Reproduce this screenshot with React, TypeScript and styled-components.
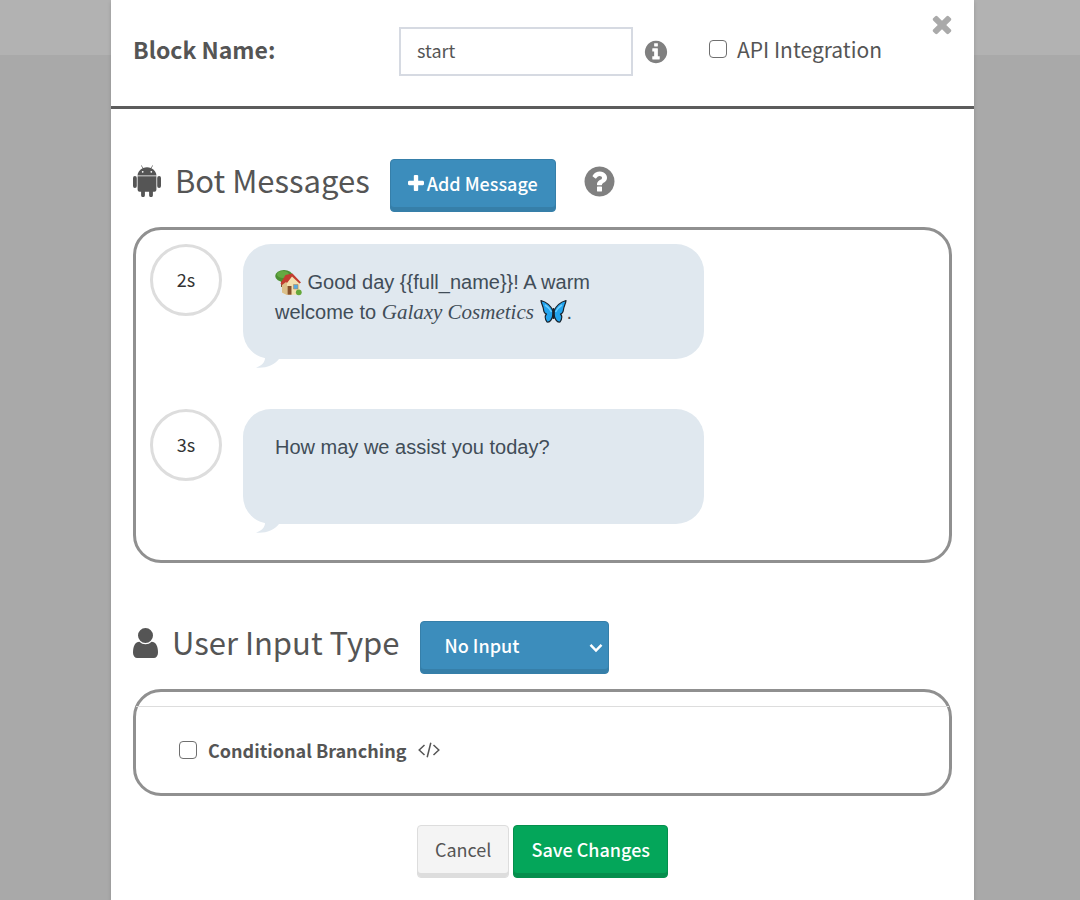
import React from "react";
import styled, { createGlobalStyle, css } from "styled-components";

const uiFont = `"Noto Sans CJK SC", "Source Sans Pro", sans-serif`;
const ink = "#555";

const GlobalStyle = createGlobalStyle`
  *, *::before, *::after { box-sizing: border-box; }
  body {
    margin: 0;
    background: #a9a9a9;
    color: ${ink};
    font-family: ${uiFont};
    font-size: 18px;
    line-height: 26px;
  }
`;

const Backdrop = styled.div`
  min-height: 100vh;
  display: flex;
  padding: 0 106px 0 111px;
  background: linear-gradient(#b2b2b2 55px, #a9a9a9 55px);
`;

const Dialog = styled.section`
  position: relative;
  flex: 1;
  min-width: 0;
  background: #fff;
  box-shadow: 0 2px 4px rgba(0, 0, 0, 0.15);
`;

const Header = styled.header`
  display: flex;
  align-items: center;
  padding: 27px 22px 30px;
  border-bottom: 3px solid #5c5c5c;
`;

const NameLabel = styled.label`
  width: 266px;
  padding-bottom: 6px;
  font-size: 23px;
  font-weight: 700;
`;

const NameInput = styled.input`
  width: 234px;
  height: 49px;
  padding: 0 16px 3px;
  border: 2px solid #d6dae2;
  border-radius: 0;
  background: #fff;
  color: ${ink};
  font: 400 18px/26px ${uiFont};
`;

const Icon = styled.svg<{ $width: number; $height: number }>`
  flex: none;
  display: block;
  width: ${(p) => p.$width}px;
  height: ${(p) => p.$height}px;
  fill: currentColor;
`;

const IconButton = styled.button`
  display: block;
  padding: 0;
  border: 0;
  background: none;
  color: #808080;
  cursor: pointer;
`;

const InfoButton = styled(IconButton)`
  margin-left: 10px;
`;

const HelpButton = styled(IconButton)`
  margin: 0 0 8px 26px;
`;

const CloseButton = styled(IconButton)`
  position: absolute;
  top: 10px;
  right: 18px;
  color: #aaa;
`;

const CheckLabel = styled.label<{ $strong?: boolean }>`
  display: flex;
  align-items: center;
  gap: ${(p) => (p.$strong ? 11 : 10)}px;
  font-size: ${(p) => (p.$strong ? 18 : 21)}px;
  font-weight: ${(p) => (p.$strong ? 700 : 400)};
`;

const ApiOption = styled.div`
  margin: 0 0 6px 40px;
`;

const Checkbox = styled.input`
  appearance: none;
  flex: none;
  width: 18px;
  height: 18px;
  margin: 0;
  border: 1px solid #6f6f6f;
  border-radius: 4px;
  background: #fff;
  &:checked { background: #3c8dbc; }
`;

const Body = styled.div`
  padding: 50px 22px 22px;
`;

const SectionHead = styled.div<{ $spaced?: boolean }>`
  display: flex;
  align-items: center;
  height: 53px;
  margin: ${(p) => (p.$spaced ? 58 : 0)}px 0 15px;
`;

const Title = styled.h2`
  display: flex;
  align-items: center;
  gap: 14px;
  margin: 0 20px 12px 0;
  font-size: 31px;
  font-weight: 400;
  line-height: 44px;
  white-space: nowrap;

  svg { margin-top: 3px; }
`;

const buttonBase = css`
  height: 53px;
  padding: 0 17px 6px;
  border: 1px solid;
  border-radius: 4px;
  font: 500 18px/26px ${uiFont};
  cursor: pointer;
`;

const tones = {
  primary: css`
    background: #3c8dbc;
    border-color: #367fa9;
    color: #fff;
    box-shadow: inset 0 -4px 0 #367fa9;
  `,
  success: css`
    background: #04a65a;
    border-color: #058f4d;
    color: #fff;
    box-shadow: inset 0 -4px 0 #058f4d;
  `,
  plain: css`
    background: #f4f4f4;
    border-color: #ddd;
    color: ${ink};
    font-weight: 400;
    box-shadow: inset 0 -4px 0 #ddd;
  `,
};

const Button = styled.button<{ $tone: keyof typeof tones }>`
  ${buttonBase}
  display: flex;
  align-items: center;
  gap: 3px;
  white-space: nowrap;
  ${(p) => tones[p.$tone]}
`;

const SelectWrap = styled.div`
  position: relative;
`;

const Select = styled.select`
  ${buttonBase}
  ${tones.primary}
  appearance: none;
  width: 189px;
  padding-left: 24px;
`;

const Chevron = styled.svg`
  position: absolute;
  top: 22px;
  right: 6px;
  width: 14px;
  height: 10px;
  pointer-events: none;
`;

const Panel = styled.div`
  border: 3px solid #909090;
  border-radius: 28px;
`;

const MessageList = styled.ol`
  display: flex;
  flex-direction: column;
  gap: 50px;
  margin: 0;
  padding: 14px 14px 36px;
  list-style: none;
`;

const Message = styled.li`
  display: flex;
  align-items: flex-start;
  gap: 21px;
`;

const Delay = styled.span`
  flex: none;
  display: flex;
  align-items: center;
  justify-content: center;
  width: 72px;
  height: 72px;
  padding-bottom: 2px;
  border: 3px solid #ddd;
  border-radius: 50%;
  color: #333;
`;

const Bubble = styled.div`
  position: relative;
  width: 461px;
  min-height: 115px;
  padding: 23px 80px 30px 32px;
  border-radius: 28px;
  background: #e0e8ef;
  color: #414d58;
  font: 400 20px/30px "Liberation Sans", Arial, sans-serif;
`;

const Tail = styled.svg`
  position: absolute;
  left: 13px;
  bottom: -9px;
  width: 26px;
  height: 14px;
  fill: #e0e8ef;
`;

const Brand = styled.em`
  font-family: "Liberation Serif", "Times New Roman", serif;
  font-size: 21px;
  line-height: 20px;
`;

const Emoji = styled.svg`
  display: inline-block;
  width: 27px;
  height: 27px;
  margin: -4px 0;
  vertical-align: -3px;
`;

const Branching = styled.div`
  display: flex;
  align-items: center;
  gap: 12px;
  margin-top: 14px;
  padding: 30px 43px;
  border-top: 1px solid #ddd;
`;

const Actions = styled.footer`
  display: flex;
  justify-content: center;
  gap: 4px;
  margin-top: 29px;
`;

const ring =
  "m640 416q0 209-103 385.5t-279.5 279.5-385.5 103-385.5-103-279.5-279.5-103-385.5 103-385.5 279.5-279.5 385.5-103 385.5 103 279.5 279.5 103 385.5z";

const glyphs = {
  info:
    "M1152 1376v-160q0-14-9-23t-23-9h-96v-512q0-14-9-23t-23-9h-320q-14 0-23 9t-9 23v160q0 14 9 23t23 9h96v320h-96q-14 0-23 9t-9 23v160q0 14 9 23t23 9h448q14 0 23-9t9-23zm-128-896v-160q0-14-9-23t-23-9h-192q-14 0-23 9t-9 23v160q0 14 9 23t23 9h192q14 0 23-9t9-23z" + ring,
  help:
    "M1024 1376v-192q0-14-9-23t-23-9h-192q-14 0-23 9t-9 23v192q0 14 9 23t23 9h192q14 0 23-9t9-23zm256-672q0-88-55.5-163t-138.5-116-170-41q-243 0-371 213-15 24 8 42l132 100q7 6 19 6 16 0 25-12 53-68 86-92 34-24 86-24 48 0 85.5 26t37.5 59q0 38-20 61t-68 45q-63 28-115.5 86.5t-52.5 125.5v36q0 14 9 23t23 9h192q14 0 23-9t9-23q0-19 21.5-49.5t54.5-49.5q32-18 49-28.5t46-35 44.5-48 28-60.5 12.5-81zm384 192q0 209-103 385.5t-279.5 279.5-385.5 103-385.5-103-279.5-279.5-103-385.5 103-385.5 279.5-279.5 385.5-103 385.5 103 279.5 279.5 103 385.5z",
  close:
    "M1490 1322q0 40-28 68l-136 136q-28 28-68 28t-68-28l-294-294-294 294q-28 28-68 28t-68-28l-136-136q-28-28-28-68t28-68l294-294-294-294q-28-28-28-68t28-68l136-136q28-28 68-28t68 28l294 294 294-294q28-28 68-28t68 28l136 136q28 28 28 68t-28 68l-294 294 294 294q28 28 28 68z",
  plus:
    "M1600 736v192q0 40-28 68t-68 28h-416v416q0 40-28 68t-68 28h-192q-40 0-68-28t-28-68v-416h-416q-40 0-68-28t-28-68v-192q0-40 28-68t68-28h416v-416q0-40 28-68t68-28h192q40 0 68 28t28 68v416h416q40 0 68 28t28 68z",
  user:
    "M1536 1399q0 109-62.500 187t-150.500 78h-854q-88 0-150.500-78t-62.500-187q0-85 8.500-160.500t31.500-152 58.500-131 94-89 134.500-34.500q131 128 313 128t313-128q76 0 134.500 34.500t94 89 58.500 131 31.500 152 8.500 160.500zm-256-887q0 159-112.500 271.500t-271.500 112.500-271.500-112.500-112.500-271.500 112.500-271.500 271.500-112.500 271.500 112.500 112.500 271.500z",
};

type GlyphProps = { name: keyof typeof glyphs; width: number; height?: number; box?: string };

const Glyph = ({ name, width, height = width, box = "0 0 1792 1792" }: GlyphProps) => (
  <Icon $width={width} $height={height} viewBox={box} aria-hidden="true">
    <path d={glyphs[name]} />
  </Icon>
);

const AndroidIcon = () => (
  <svg width="28" height="32" viewBox="0 0 28 32" fill={ink} aria-hidden="true">
    <path d="M4.500 10.500C4.700 7.200 6.700 4.700 9.600 3.300L8 .6l.5-.3 1.700 2.700a11 11 0 0 1 7.600 0L19.500.3l.5.3-1.600 2.700c2.900 1.400 4.900 3.900 5.100 7.200z" />
    <circle cx="9.700" cy="6.800" r="0.900" fill="#fff" />
    <circle cx="18.300" cy="6.800" r="0.900" fill="#fff" />
    <path d="M4.600 11.200h18.800v13.500a2 2 0 0 1-2 2h-1.500v3.500a1.900 1.900 0 0 1-3.800 0v-3.500h-4.200v3.500a1.900 1.900 0 0 1-3.800 0v-3.500H6.600a2 2 0 0 1-2-2z" />
    <rect x="0" y="11" width="3.800" height="12" rx="1.900" />
    <rect x="24.200" y="11" width="3.800" height="12" rx="1.900" />
  </svg>
);

const CodeIcon = () => (
  <svg width="22" height="16" viewBox="0 0 22 16" fill="none" stroke={ink} strokeWidth="1.500" aria-hidden="true">
    <path d="M6.500 3 1.200 8l5.300 5M15.500 3l5.300 5-5.300 5M12.800.8 9.200 15.200" />
  </svg>
);

const HouseEmoji = () => (
  <Emoji viewBox="0 0 27 27" role="img" aria-label="House with garden">
    <path d="M6 10h2.500v8H6z" fill="#7d5432" />
    <ellipse cx="9" cy="7" rx="8.800" ry="6" fill="#4c8f31" />
    <ellipse cx="8" cy="5.500" rx="6" ry="3.500" fill="#65a942" />
    <path d="M7 14.500 10 11l7.500-4.500L24.500 14v11.500L12 26l-5-2.500z" fill="#f3dfae" />
    <path d="M7 14.500 10 10.500l2 3.500v12l-5-2.500z" fill="#dcc08a" />
    <path d="M5.500 14.500 10.500 6 17.500 4.500 26 13.500l-1.500 1L17 7.500l-5 6.500-1-1-4 3z" fill="#c23c30" />
    <path d="M12.500 17h4v8.700h-4z" fill="#87502b" />
    <path d="M18.500 15.500h4.500V20h-4.500z" fill="#57a9e0" stroke="#b48a58" strokeWidth="0.600" />
    <circle cx="23.800" cy="23.300" r="2.900" fill="#65a83a" />
  </Emoji>
);

const ButterflyEmoji = () => (
  <Emoji viewBox="0 0 27 27" role="img" aria-label="Butterfly">
    <g fill="#22a4ee" stroke="#17212b" strokeWidth="1.200" strokeLinejoin="round">
      <path d="M13 12C11 7 6 3 1 1.500c.2 3 2.200 5.500 2.500 9 .3 2.500 1 4 3 4.500-2 2-1.500 5 .5 8 3 .8 5.500-3 6-8z" />
      <path d="M14 12C16 7 21 3 26 1.500c-.2 3-2.200 5.500-2.500 9-.3 2.500-1 4-3 4.500 2 2 1.500 5-.5 8-3 .8-5.500-3-6-8z" />
    </g>
    <path d="M5 6c2.500 1.500 5 4 6.500 7M22 6c-2.500 1.500-5 4-6.500 7" fill="none" stroke="#6fd0ff" strokeWidth="1.500" />
    <path d="M13.500 10v9" stroke="#17212b" strokeWidth="2.200" strokeLinecap="round" />
  </Emoji>
);

const SpeechBubble = ({ delay, children }: { delay: string; children: React.ReactNode }) => (
  <Message>
    <Delay>{delay}</Delay>
    <Bubble>
      {children}
      <Tail viewBox="0 0 26 14" aria-hidden="true">
        <path d="M8 0c2.500 5 .5 11-8 13.500C9 14.500 18 11.500 23 5L26 0z" />
      </Tail>
    </Bubble>
  </Message>
);

export default function App() {
  return (
    <>
      <GlobalStyle />
      <Backdrop>
        <Dialog role="dialog" aria-label="Edit block">
          <Header>
            <NameLabel htmlFor="block-name">Block Name:</NameLabel>
            <NameInput id="block-name" type="text" defaultValue="start" />
            <InfoButton type="button" aria-label="Block name info">
              <Glyph name="info" width={26} />
            </InfoButton>
            <ApiOption>
              <CheckLabel>
                <Checkbox type="checkbox" />
                API Integration
              </CheckLabel>
            </ApiOption>
          </Header>
          <CloseButton type="button" aria-label="Close">
            <Glyph name="close" width={28} />
          </CloseButton>
          <Body>
            <SectionHead>
              <Title>
                <AndroidIcon />
                Bot Messages
              </Title>
              <Button type="button" $tone="primary">
                <Glyph name="plus" width={16} box="192 128 1408 1408" />
                Add Message
              </Button>
              <HelpButton type="button" aria-label="Help">
                <Glyph name="help" width={35} />
              </HelpButton>
            </SectionHead>
            <Panel>
              <MessageList>
                <SpeechBubble delay="2s">
                  <HouseEmoji />
                  {" Good day {{full_name}}! A warm welcome to "}
                  <Brand>Galaxy Cosmetics</Brand> <ButterflyEmoji />.
                </SpeechBubble>
                <SpeechBubble delay="3s">How may we assist you today?</SpeechBubble>
              </MessageList>
            </Panel>
            <SectionHead $spaced>
              <Title>
                <Glyph name="user" width={25} height={30} box="256 128 1280 1536" />
                <label htmlFor="input-type">User Input Type</label>
              </Title>
              <SelectWrap>
                <Select id="input-type" defaultValue="none">
                  <option value="none">No Input</option>
                  <option value="text">Text</option>
                </Select>
                <Chevron viewBox="0 0 14 10" fill="none" stroke="#fff" strokeWidth="2.500" aria-hidden="true">
                  <path d="M1.500 1.800 7 7.500l5.500-5.700" />
                </Chevron>
              </SelectWrap>
            </SectionHead>
            <Panel>
              <Branching>
                <CheckLabel $strong>
                  <Checkbox type="checkbox" />
                  Conditional Branching
                </CheckLabel>
                <CodeIcon />
              </Branching>
            </Panel>
            <Actions>
              <Button type="button" $tone="plain">Cancel</Button>
              <Button type="button" $tone="success">Save Changes</Button>
            </Actions>
          </Body>
        </Dialog>
      </Backdrop>
    </>
  );
}
